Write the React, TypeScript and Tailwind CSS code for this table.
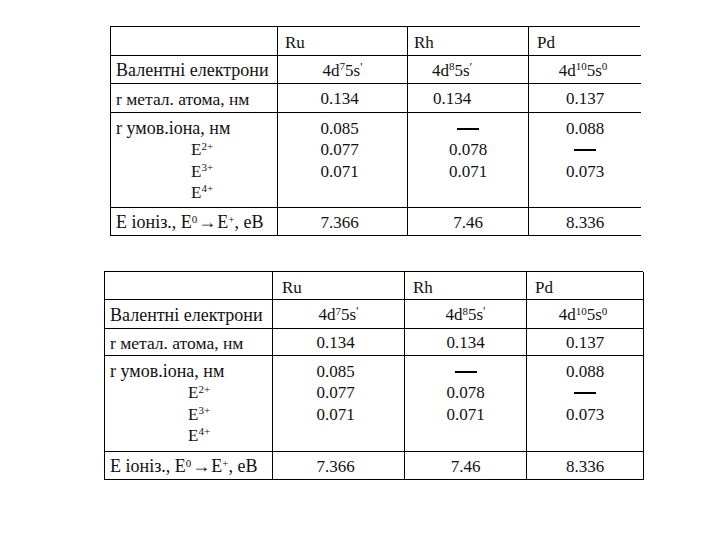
import React from "react";

function Dash() {
  return <span className="inline-block w-[22px] h-[2px] bg-black align-middle" />;
}

type Props = {
  cols: string;
  rows: string;
  rightBorder: boolean;
  headerPl: string[];
  shiftRh: boolean;
  indent: string;
};

function Table({ cols, rows, rightBorder, headerPl, shiftRh, indent }: Props) {
  const cell = (last: boolean) =>
    "border-b border-black " + (last ? (rightBorder ? "border-r" : "") : "border-r");
  const rhPad = shiftRh ? " pr-[32px]" : "";
  return (
    <div
      className="grid border-l border-t border-black text-[17px] text-[#111]"
      style={{ gridTemplateColumns: cols, gridTemplateRows: rows }}
    >
      {/* header */}
      <div className={cell(false)} />
      <div className={cell(false) + " flex items-center pt-[4px] " + headerPl[0]}>Ru</div>
      <div className={cell(false) + " flex items-center pt-[4px] " + headerPl[1]}>Rh</div>
      <div className={cell(true) + " flex items-center pt-[4px] " + headerPl[2]}>Pd</div>

      {/* valence */}
      <div className={cell(false) + " flex items-center pl-[5px] pt-[2px] text-[18px]"}>Валентні електрони</div>
      <div className={cell(false) + " flex items-center justify-center pt-[2px]"}>
        <span>4d<sup className="text-[11px]">7</sup>5s<span className="text-[12px] align-top">'</span></span>
      </div>
      <div className={cell(false) + " flex items-center justify-center pt-[2px]" + rhPad}>
        <span>4d<sup className="text-[11px]">8</sup>5s<span className="text-[12px] align-top">′</span></span>
      </div>
      <div className={cell(true) + " flex items-center justify-center pt-[2px] pr-[4px]"}>
        <span>4d<sup className="text-[11px]">10</sup>5s<sup className="text-[11px]">0</sup></span>
      </div>

      {/* metal radius */}
      <div className={cell(false) + " flex items-center pl-[5px] pt-[2px] text-[17.5px]"}>r метал. атома, нм</div>
      <div className={cell(false) + " flex items-center justify-center pt-[2px] pr-[6px]"}>0.134</div>
      <div className={cell(false) + " flex items-center justify-center pt-[2px]" + rhPad}>0.134</div>
      <div className={cell(true) + " flex items-center justify-center pt-[2px]"}>0.137</div>

      {/* ion radius */}
      <div className={cell(false) + " flex flex-col pl-[5px] pt-[5px] leading-[21.3px]"}>
        <span className="text-[18px]">r умов.іона, нм</span>
        <span className={indent}>E<sup className="text-[11px]">2+</sup></span>
        <span className={indent}>E<sup className="text-[11px]">3+</sup></span>
        <span className={indent}>E<sup className="text-[11px]">4+</sup></span>
      </div>
      <div className={cell(false) + " flex flex-col items-center pt-[5px] pr-[6px] leading-[21.3px]"}>
        <span>0.085</span>
        <span>0.077</span>
        <span>0.071</span>
      </div>
      <div className={cell(false) + " flex flex-col items-center pt-[5px] leading-[21.3px]"}>
        <span className="h-[21.3px] flex items-center"><Dash /></span>
        <span>0.078</span>
        <span>0.071</span>
      </div>
      <div className={cell(true) + " flex flex-col items-center pt-[5px] leading-[21.3px]"}>
        <span>0.088</span>
        <span className="h-[21.3px] flex items-center"><Dash /></span>
        <span>0.073</span>
      </div>

      {/* ionisation */}
      <div className={cell(false) + " flex items-center pl-[5px] pt-[2px] text-[18px]"}>
        <span>E іоніз., E<sup className="text-[11px]">0</sup><span className="px-[1px]">→</span>E<sup className="text-[11px]">+</sup>, eB</span>
      </div>
      <div className={cell(false) + " flex items-center justify-center pt-[2px] pr-[6px]"}>7.366</div>
      <div className={cell(false) + " flex items-center justify-center pt-[2px]"}>7.46</div>
      <div className={cell(true) + " flex items-center justify-center pt-[2px]"}>8.336</div>
    </div>
  );
}

export default function App() {
  return (
    <div
      className="w-[720px] h-[540px] bg-white flex flex-col font-['Liberation_Serif','Times_New_Roman',serif]"
    >
      <div className="ml-[110px] mt-[26px] w-[530px]">
        <Table
          cols="167px 130px 121px 112px"
          rows="29px 28px 29px 95px 28px"
          rightBorder={false}
          headerPl={["pl-[7px]", "pl-[6px]", "pl-[8px]"]}
          shiftRh={true}
          indent="pl-[75px]"
        />
      </div>
      <div className="ml-[104px] mt-[35px] w-[539px]">
        <Table
          cols="168px 132px 122px 117px"
          rows="28px 29px 27px 96px 28px"
          rightBorder={true}
          headerPl={["pl-[9px]", "pl-[8px]", "pl-[8px]"]}
          shiftRh={false}
          indent="pl-[78px]"
        />
      </div>
    </div>
  );
}
